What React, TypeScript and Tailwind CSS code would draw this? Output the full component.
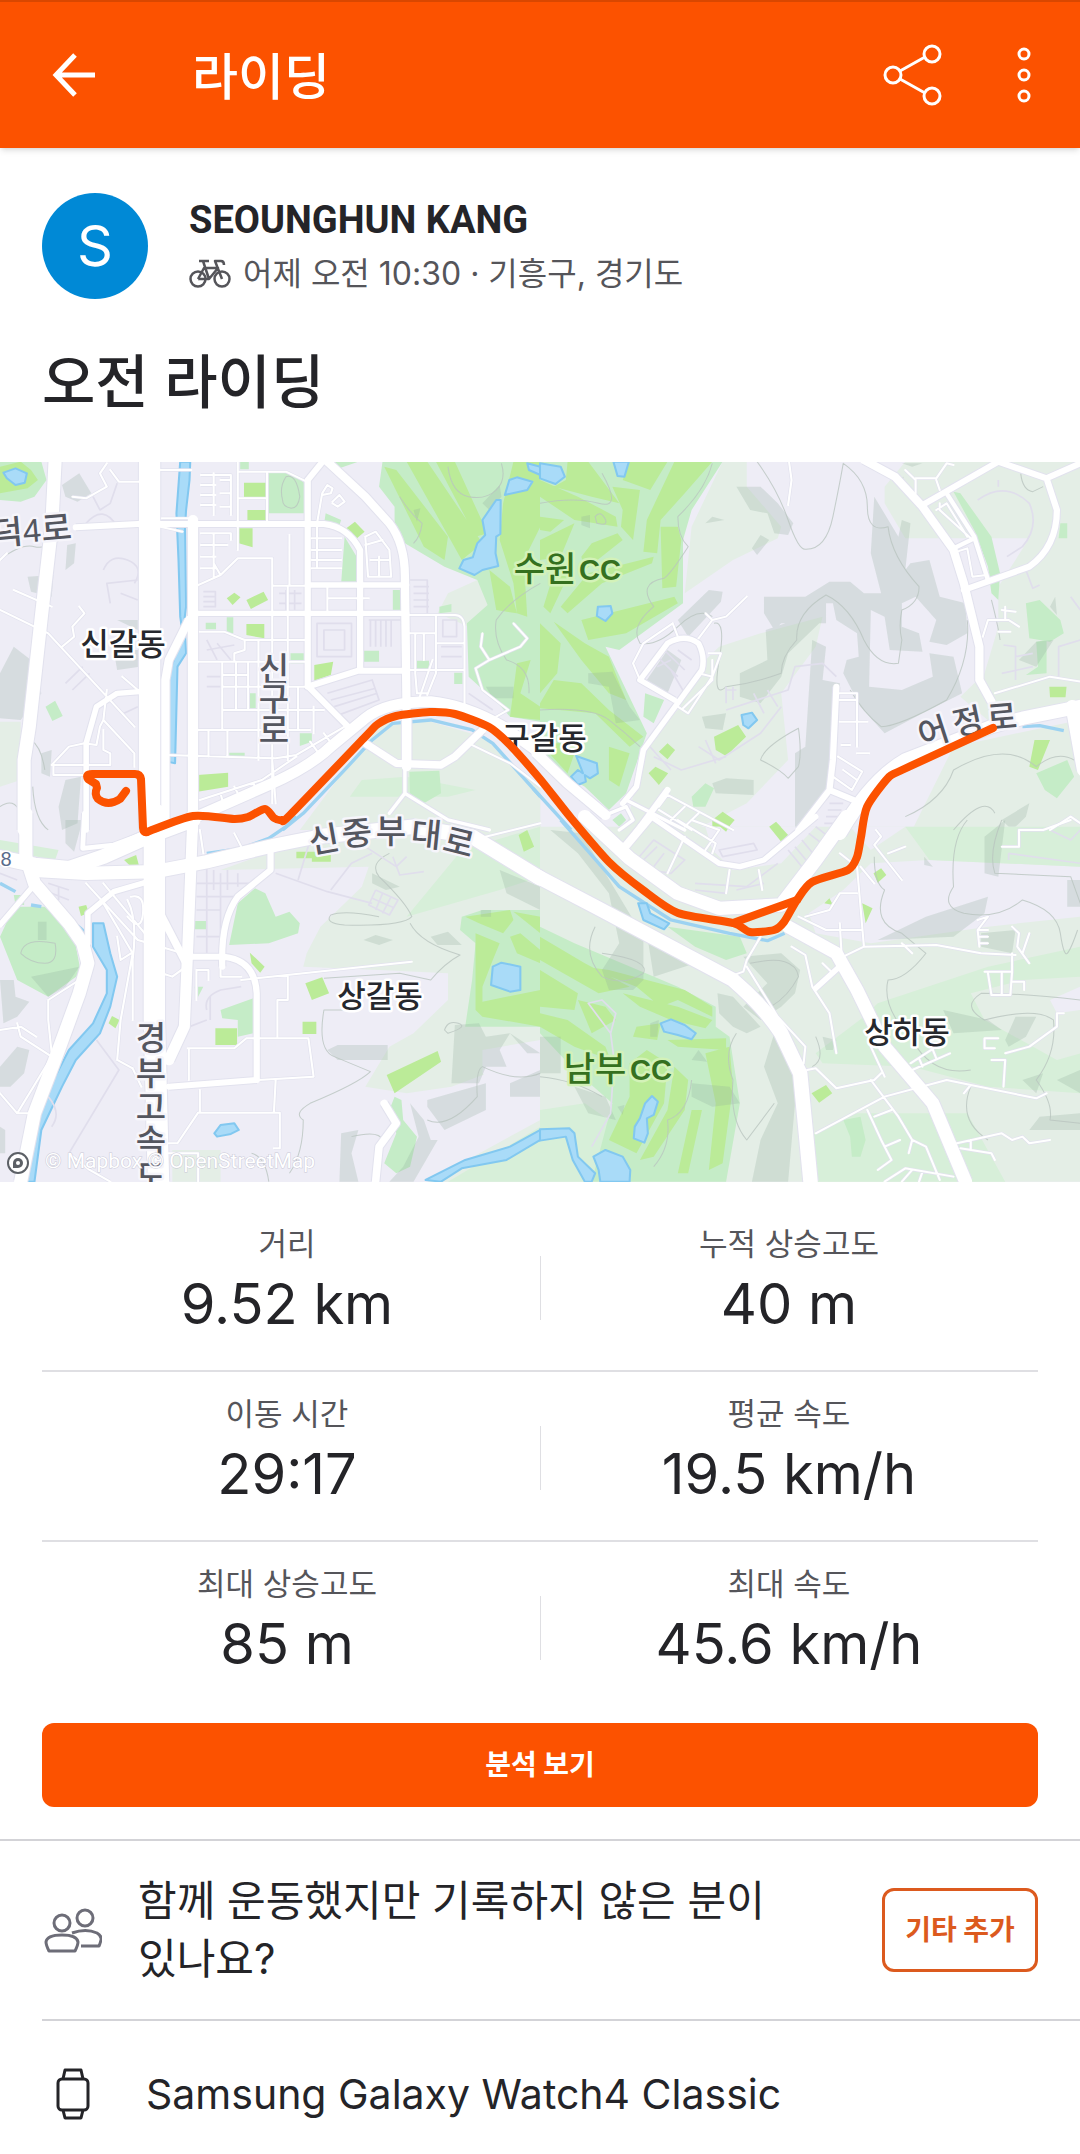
import type { ReactNode } from 'react';

/* ---------- map data, drawn in four tiles ---------- */

type Tile = {
  origin: string;
  pale?: string;
  lilac?: string;
  soft?: string;
  park?: string;
  bright?: string;
  shade?: string;
  water?: string;
  stream?: string;
  contour?: string;
  faint?: string;
  minor?: string;
  major: [number, string][];
};

const NW: Tile = {
  origin: 'translate(0 -2) scale(0.3446 0.3333)',
  pale: 'M1110 790L1250 785 1400 830 1568 985V1110H870L1000 930ZM0 785H60V960L0 980ZM1270 460L1300 400 1385 360 1420 435 1360 500Z',
  soft: 'M1015 1010L1050 960 1180 950 1380 990 1300 1010Z',
  park: 'M0 5H120L135 60 100 110 60 125 0 120ZM780 35H840L885 70V160H780ZM1110 5H1568V785L1480 770 1450 735 1360 650 1355 490 1415 435 1385 360 1290 320 1175 250 1145 215V140L1100 80ZM945 160L990 180 980 210 940 195ZM1000 230L1035 290V370H990ZM1140 390H1163V450H1140ZM1052 572H1100V605H1052ZM843 580H885V610H843ZM1210 602H1245V628H1210ZM1318 638H1342V672H1318ZM725 700H742V745H725ZM870 820H905V845L870 858ZM665 878H710V890H665ZM658 472H677V520H658ZM597 488H627V508H597ZM1275 440L1310 432V455L1275 460ZM132 740L160 722 182 768 152 783ZM1188 935L1275 932 1280 1000 1230 1030 1190 1005ZM697 5H722V28H697ZM965 5H1040L985 25Z',
  bright:
    'M0 20L60 5 90 30 110 60 80 85 0 100ZM1115 20L1150 30 1300 230 1290 300 1230 260ZM1180 5L1240 5 1400 250 1340 300ZM1265 5H1320L1415 220 1380 230ZM1450 240L1460 130 1490 5H1568V200L1520 300 1530 470 1500 460 1490 370ZM1420 330L1480 380 1500 460 1440 450ZM1500 610L1540 600 1510 700 1568 740V780L1480 770ZM708 68H772V112H708ZM718 150H772V185H718ZM693 205H733V262L693 250ZM1005 205L1030 185 1058 215 1030 240ZM658 415L680 398 698 412 675 435ZM715 420L765 395 778 420 728 447ZM715 492H767V535L715 525ZM912 615L967 605 960 645 912 662ZM573 945L662 938V980L573 995Z',
  shade:
    'M180 75L230 40 265 100 225 125 190 110ZM80 350L155 345 150 410 90 395ZM40 560L90 600 120 700 60 780 0 775V640ZM330 570H405V620L340 630ZM340 480H400V510ZM190 960L235 950 225 1090 180 1110 170 1040ZM195 255L220 250 215 310 190 330ZM120 880L150 870 145 950 120 940ZM1400 130L1450 75 1455 110 1420 150ZM1410 680H1490V715H1430ZM1200 150L1220 145 1210 185Z',
  water:
    'M523 5H552L550 60 540 150 537 200 540 440 535 480 540 580 515 620 508 910 485 905 488 650 530 520 523 470 518 300 512 160ZM10 38L45 25 78 40 72 68 45 75 20 55ZM1478 60L1500 52 1545 65 1530 90 1465 105ZM1440 120H1453L1452 222 1440 230 1438 280 1446 318 1400 330 1377 345 1333 325 1345 300 1372 292 1385 250 1408 225 1400 180ZM1530 10L1568 20V45L1535 30Z',
  stream: 'M820 1110L880 1060 1000 930 1080 840 1140 790 1250 780 1370 810 1430 850 1568 1010',
  contour:
    'M1300 20Q1310 100 1360 110T1440 90 1455 10M1160 110Q1190 160 1225 190 1220 230 1200 250M820 120Q810 80 830 50 860 40 870 110 865 145 845 145 820 140 820 120M1568 370Q1480 420 1440 480 1430 540 1470 600 1540 620 1535 700M90 840Q120 860 130 930M0 1040Q40 1010 60 1060M95 980Q100 1080 140 1110M0 300Q60 250 100 260T200 220',
  faint:
    'M830 390V455M855 390V455M810 400H875M810 430H875M590 395H625V440H590M590 410H625M590 425H625M920 490H1020V590H920ZM940 510H1000V570H940ZM1075 480V560M1090 480V560M1105 480V560M1120 480V560M1135 480V560M1070 480H1165M1190 360H1240V460M1200 380H1245M1200 400H1245M1200 420H1245M1200 440H1245M1285 480H1325V530H1285ZM950 700L1080 660 1100 720 970 770M960 720L1090 685M970 740L1095 700M600 540L630 600M630 550L670 600M600 570L680 555M270 110L290 150 320 130 340 70M250 190Q300 130 340 200M300 330Q320 280 370 300T390 370M320 430L310 370 400 360M350 400L400 420M190 670L240 620M210 690L260 640M360 760L400 740M1280 560H1340M1280 590H1340M600 650H640M600 680H640M1360 700L1430 750',
  minor:
    'M465 30H555M583 45H670V165M620 40V165M583 75H625M583 105H625M583 135H625M670 60H640M670 100H640M670 140H640M690 5V270M690 35H830L890 65M775 35V195M690 115H775M583 220H670V240M620 220V350M583 255H660M583 290H625M583 325H625M565 380L640 345 690 295H790V1030M620 310L640 345M840 225V375M790 377H885M950 380V460M950 415H1070M835 380V460M905 235H990M905 270H990M905 300H990M905 325H990M920 200V325M1060 230L1090 215 1130 270 1135 350H1068L1060 230M1075 300H1130M1100 290V350M1060 255L1110 240M920 190L935 100 950 75 965 85 960 100 935 105M965 125L985 105 1000 125 980 140 965 130M580 515H650L710 540H885M835 470V900M710 540V570L680 580V605M575 605H885M645 610V810M720 610V750M750 540V900M645 645H720M685 610V750M645 680H885M645 750H940M575 810H900M485 885L800 895 860 885 1000 800M660 810V890M605 810V890M865 680V810M910 740V820M790 900L800 1030M580 1020L760 960 860 890M640 1000L650 1040M680 980L700 1020M735 970L750 1000M900 845L925 880M940 820L965 855M1180 465H1320Q1345 465 1348 500V735M1265 465V640L1240 705M1185 520H1265M1205 520V640M1230 520V600M1180 630H1348M1270 550H1345M1205 640L1210 700H1240M1255 600L1215 720M210 110L250 115 310 80 290 40 310 10M320 30L345 65H405M230 440L245 460 210 500 215 530 180 560M0 450L140 520 310 710 390 800M40 390L150 440M245 850L280 855 290 800 300 780 310 690M300 780L390 880V920M150 915H320V880L300 870V810M150 915L200 860 245 850M155 915V945H245M355 650L400 690M470 175H550M465 200L530 215M0 300L20 280M1400 520L1395 560 1420 600 1510 560 1530 535 1490 490M1420 600L1380 625 1400 690 1475 750 1440 770M1360 850L1480 910 1568 980',
  major: [
    [38, 'M160 0L150 200 120 470 85 800 70 900V1110'],
    [62, 'M434 0V1110'],
    [30, 'M560 180V1110'],
    [18, 'M220 202L400 192H940Q1010 200 1045 270V630'],
    [18, 'M940 0L893 60V680L1040 632H1180'],
    [24, 'M945 0L1060 110 1130 190Q1175 250 1175 350L1180 760'],
    [16, 'M893 375H1180M560 460H1180'],
    [18, 'M900 685L1020 810'],
    [24, 'M548 480L490 600 480 660V1110'],
    [16, 'M405 695L340 700 280 740 250 850V1110'],
    [32, 'M560 1075L780 975Q900 920 960 860L1060 775Q1120 725 1250 725 1350 735 1460 800L1568 880'],
    [22, 'M1060 850L1150 910 1280 915 1320 890 1400 810'],
    [28, 'M1180 780V920'],
    [10, 'M1175 920V1000L1130 1060M1175 1000L1300 1080 1420 1110'],
  ],
};

const NE: Tile = {
  origin: 'translate(540 -2) scale(0.3446 0.3333)',
  pale: 'M420 400L440 200 530 5H600V80L700 200 690 235 560 300ZM520 560L640 520 820 470 800 560 700 700 720 900 600 1030 450 1110H250L300 850 400 750 480 600ZM1000 80L1060 5H1568V760L1310 790 1220 710 1290 640 1330 500 1330 380 1420 235H1060L1000 130ZM1080 1110L1200 860 1568 780V1110Z',
  park: 'M0 5H530L440 150 415 240V430L230 570 190 560 310 820 250 1000 200 1050 130 980 0 900ZM1200 95L1220 100 1310 230 1335 340 1330 420 1310 400 1300 320 1260 210ZM1410 430L1450 420 1510 480 1520 520 1480 545 1420 535ZM1440 545L1470 540V640L1410 645 1445 620ZM1510 190H1530V235H1505ZM1440 940L1530 900 1550 950 1500 1015 1465 990ZM440 1010L480 970 505 985 480 1040 445 1040ZM305 700L360 720 330 790 300 770ZM210 1080L235 1060 250 1080 230 1100Z',
  bright:
    'M40 80L75 60 80 5 140 5 180 60 230 130 150 110ZM0 60L110 110 220 170 225 200 100 180 0 110ZM0 170L70 180 30 215 0 210ZM210 80L290 90 270 240 235 200 240 150ZM240 60L260 5H370L320 90ZM390 5H500L420 100 350 180 340 280 300 275 310 180ZM350 200L400 200 410 240 395 380 355 385ZM100 190L60 290 0 300V240ZM150 250L225 220 240 240 130 330 120 290ZM60 440L140 340 330 290 325 310 180 370 80 460ZM10 440L40 340 80 350 30 460ZM120 480L390 410 400 430 250 520 140 540ZM0 490L60 550 50 640 0 700ZM40 485L130 550 200 590 250 720 200 700 120 600ZM0 730L40 660 120 670 200 750 300 830 260 860 160 760 0 745ZM0 850L110 850 80 940ZM200 860L260 880 230 980 200 960ZM505 830L575 795 598 830 540 888 510 870ZM345 875L370 850 392 870 370 898ZM315 940L335 920 372 940 345 975ZM1435 840L1480 840 1445 930 1420 920ZM1478 680H1528L1525 712H1480ZM500 1080L530 1055 565 1080 540 1110H500ZM670 1110L685 1088 710 1110Z',
  shade:
    'M570 80L640 80 690 130 735 190 720 225 680 220 660 160 610 150ZM640 225L665 240 630 285 615 265ZM970 110L1040 230 1050 180 1075 190 1060 330 1075 310 1130 300 1160 410 1235 430 1240 520 1180 555 1130 545 1150 480 1090 410 1050 430 1050 500 1100 520 1110 575 1015 570 1000 470 960 450 955 680 1050 690 1140 650 1130 580 1200 590 1225 700 1110 760 1000 820 930 740 880 640 890 600 925 590 920 520 860 480 850 430 830 430V490L700 490 680 510 650 460V410L770 410 840 365H900L940 400 990 400 960 280ZM655 510L740 480 830 470 720 580 700 650 640 730 580 710 580 640 660 600ZM790 540L830 560 820 660 870 670 860 900 840 1010 750 1110H740V880L770 860ZM400 480L490 390 530 395 525 425 430 530ZM140 640L210 635 260 740 290 780 220 790 200 680 140 670ZM470 770L540 760 530 810 480 805ZM500 970L540 955 620 960V1005L510 1000ZM310 660L370 570 410 600 370 700ZM1340 1080L1420 1030 1410 1070 1370 1110ZM480 190L500 170 535 180ZM120 170L145 165V205L120 195ZM1480 440L1495 410 1500 465ZM1440 545L1490 540 1440 620 1390 600ZM1050 10H1110L1080 20ZM1025 60L1055 50 1050 90ZM975 710L1000 710 1015 770 990 770Z',
  water:
    'M0 10L60 20 72 50 45 72 0 55ZM213 5H258L245 50 225 48ZM168 440L205 438 210 460 190 483 165 468ZM585 765L615 758 630 780 605 805 590 795ZM105 888L165 910 168 940 145 955 130 945 133 965 110 975 90 950 110 930 125 940Z',
  stream: 'M1400 800L1450 797 1520 812M-20 985L90 1110',
  contour:
    'M630 5Q690 90 720 180T770 268Q830 270 850 170T880 10Q950 60 950 140T1010 200Q1020 290 1100 380 1100 430 1050 450 1040 500 1050 540L1040 610Q980 620 940 540 900 440 830 405 740 460 745 540 700 590 700 640 620 670 540 680 500 720 520 600T505 490M500 10Q480 90 400 170 400 230 430 260 380 340 360 355 280 370 330 440 260 500 290 550 340 560 400 500T500 470M0 130Q100 110 170 130T180 40M0 750Q150 740 200 780T290 860M720 955Q700 930 640 900 650 860 750 805 760 880 750 920ZM1240 480Q1250 600 1180 720 1040 800 990 800 940 760 900 690M1550 900Q1500 870 1440 920 1350 840 1200 930 1170 1020 1060 1070M1200 1110Q1290 1000 1320 1060M1395 40Q1400 90 1430 95L1460 80M1310 420Q1330 500 1335 540M160 170Q175 150 188 175T165 190Z',
  faint:
    'M1270 120Q1350 60 1420 130 1450 200 1400 260L1355 290M1345 555L1380 560V660M1340 640L1430 620M1380 590L1430 580M1505 650V560L1568 540M1410 330L1430 385 1450 375M340 590L400 650M360 570L420 630M380 630L420 700M400 570L440 600M340 620L380 600M540 680V730M560 680V720M540 690H570M540 750L720 690 740 620 820 610 860 650M620 700L650 760M660 690L690 740M480 840L510 910M460 860L520 900 640 820 700 740M310 850L380 930M330 890L410 930 540 890M840 1030H880M835 1050H875M830 1070H870M825 1090H865M1540 410L1568 450M1330 60V80',
  minor:
    'M385 490L300 550 270 610 290 660M385 490L400 530M490 580H525L500 650 430 760 400 740M500 600V660L415 745M500 650L460 640M600 410L540 470 500 480 460 535M480 460L500 480M722 0L730 60 720 135M870 700H920V860M870 720H920M870 785H950M875 855H900M920 880H955M865 890L935 935 905 990 850 950M880 930L920 960M345 1040L370 1005 560 1110M345 1050L440 1110M380 1080L420 1040M420 1100L460 1060M1160 130V150L1250 235M1150 150L1180 130 1240 230M1210 275L1240 265 1255 350 1295 345M1285 530L1300 480H1360L1390 500M1330 515H1365M1340 450L1380 455M1350 440V480M1060 30L1090 60V100M1090 55L1150 55 1180 10 1200 15M1150 60L1160 90M1320 700L1480 650 1568 665M1480 1110L1540 1070 1568 1090',
  major: [
    [24, 'M940 0L1030 50 1110 140 1200 270 1230 370 1275 560V660L1310 725'],
    [18, 'M1110 135L1330 5 1470 55 1568 10M1470 55L1500 150Q1500 260 1420 320L1230 390'],
    [13, 'M1180 100L1260 230 1300 360M1200 265L1260 235'],
    [40, 'M870 1120Q960 960 1060 900L1310 800 1400 775 1568 740'],
    [40, 'M1545 740L1578 930'],
    [16, 'M390 720L290 660 370 550Q420 520 460 550 480 590 470 630L300 870 280 980 240 1030'],
    [18, 'M860 680L850 900 840 990 750 1110M840 990L910 1020'],
    [30, 'M-10 880L80 970 190 1065'],
    [10, 'M190 1065L250 1040 270 1080 230 1110M250 1020L420 1110'],
    [18, 'M370 990L270 1130'],
  ],
};

const SW: Tile = {
  origin: 'translate(0 358) scale(0.3446 0.3333)',
  pale: 'M890 400L930 320 1050 200 1070 140 640 150 800 90 1000 0H1568V1085H1240L1568 900V700L1310 800 1180 820 1060 800 1130 680 1200 640 1300 540V460L1100 450 880 440ZM500 990H640V1085H500Z',
  lilac: 'M1400 690L1568 660V830L1480 830 1400 760Z',
  soft: 'M1180 290L1340 90 1568 20V170L1450 210ZM1300 1085L1568 920V1085ZM0 60L170 90 160 120 0 90Z',
  park: 'M1340 290L1400 270H1568V620H1350L1370 480 1380 370 1335 330ZM690 250L740 205 770 220 800 290 840 275 870 310 865 340 780 370 665 375ZM40 260H130L215 350 235 460 140 530 50 480 0 350ZM640 570L735 535V640L690 650V600L645 595ZM1145 830L1165 840 1170 900 1210 950 1190 1040 1150 1060 1115 1030 1150 940 1130 870ZM565 500H590L570 540ZM563 303H600V328H563ZM40 225H70V255H45Z',
  bright:
    'M1350 290L1480 270 1490 300 1460 340 1390 310ZM1380 340L1450 370 1430 420 1400 500V590L1380 570ZM1480 350L1510 340 1568 390V430L1500 400ZM1400 545L1568 510V620L1400 590ZM1490 275L1568 290V340ZM886 490L935 472 955 520 905 540ZM625 625H688V675H625ZM878 605H918V642H878ZM1122 765L1270 693 1280 725 1145 820ZM725 398L768 440 755 458 730 430ZM228 260L250 255 258 278 235 288ZM325 588L347 600 335 625 315 610ZM360 120L395 105 405 143 385 145ZM860 95H960V125H905V115H860ZM1505 45L1530 30 1550 80 1520 95Z',
  shade:
    'M950 690L980 675H1125V720H980ZM1320 615L1390 610 1410 650 1480 640 1450 690 1470 740 1410 740 1390 790H1310ZM1480 640L1568 700 1530 700ZM1480 790L1568 750V830H1480ZM1240 840L1410 790V870L1290 930 1240 860ZM1190 850L1230 900 1250 960 1270 960 1200 1085H1130L1170 1040 1215 950ZM990 940L1040 930 1020 1000 1040 1085H985ZM1080 160L1160 200 1120 210 1080 190ZM1250 350L1300 335 1340 375H1270ZM1450 150L1568 200V270L1470 220ZM0 480L40 480 45 530 85 545 50 590 10 610ZM0 740L50 680 85 690 70 760 30 800H0ZM110 305H135V360H110ZM90 470L230 440 190 500 140 530ZM190 0H240L215 95 190 70ZM1055 360L1090 345 1140 360 1100 375ZM1395 270H1425V290H1395ZM0 920L15 930V1000H0Z',
  water:
    'M270 310H300L320 400 340 470 320 560 290 640 220 720 180 800 120 930 100 1085H65L90 950 150 790 200 690 270 610 310 520V450L270 380ZM622 940L640 915 680 910 693 930 670 942 630 950ZM1235 1080L1350 1020 1480 980 1568 930V960L1470 1020 1340 1045 1280 1085ZM1430 440L1455 428 1510 440V510L1480 515 1425 495Z',
  stream: 'M0 190L45 215M90 255L120 260M195 290L250 340M600 100L700 85 780 55 830 20 860 -10',
  contour:
    'M1130 100Q1070 130 1100 170 1180 250 1195 290 1170 320 1000 315 940 310 960 285 1000 270 1100 290M1190 310Q1220 370 1335 405 1290 430 1250 480L1160 460 940 475M1000 570H940Q920 690 970 710L1075 755Q1040 790 900 850 850 880 880 900 880 1000 840 1060M60 400Q70 350 160 370 170 430 130 430T60 400M1568 760Q1500 790 1400 740 1380 750 1385 830 1300 930 1240 900M1290 630Q1300 600 1330 610T1300 640ZM1020 950Q1100 930 1110 960M730 1000Q770 1010 780 1085',
  faint:
    'M570 230H680M570 270H640M600 140V400M640 160V400M570 190H740M570 350H640M800 160L950 215 1080 250M960 210L1020 130 1080 100M865 180L900 60M1090 210L1155 240 1130 285 1070 255 1090 210M1110 220L1090 270M1135 230L1110 280M1080 235L1140 262M1140 110L1160 165 1230 155M1060 80L1150 140 1180 110M690 160V200M620 150V210M660 150V210M600 570Q590 530 640 510L700 500M610 600V530M140 190L200 210M150 220L200 240M0 160L50 180M170 200V240M550 500V620L600 600M280 660L345 750 200 1000M140 830Q180 880 150 920',
  minor:
    'M700 480L1195 425M835 465V540H805V650M545 685H680L715 655H895L910 770 750 780M548 685V780M580 810V875M800 780L795 875M515 970L575 878H812V985H795M515 970H490M490 1000H575V1085M640 440V470H700M570 450V540M570 450H605V480M370 240Q400 300 385 420V600M340 720L350 600 385 400 300 250M340 720L385 745M250 190L400 360 530 400M300 190L420 340M380 230Q420 220 415 280T370 290M340 350L350 420 380 400M0 630L60 620 105 650M50 610L60 650 150 710M0 820L50 880H90M50 880L150 710M140 540L230 480M140 540V600L150 700M470 460L500 470 540 440M580 30L590 100M680 40L700 80M1370 60L1568 10M200 1000L260 1050 320 1085M385 745L410 800',
  major: [
    [38, 'M75 -20V110L100 190 200 310 240 370 255 430 230 520 170 690 100 880 60 1085'],
    [44, 'M-10 110L100 135 200 145 300 110 430 50 560 0'],
    [14, 'M245 -20L240 85 330 75 420 40'],
    [40, 'M90 150L250 160 450 155 600 125 800 75 920 50'],
    [44, 'M920 50L1200 20 1370 50 1568 175'],
    [62, 'M448 -20V600L460 1085'],
    [32, 'M560 -20L545 380 535 620 490 720'],
    [22, 'M465 280L540 430'],
    [18, 'M490 800L745 780M550 410H650Q740 420 745 520V780M785 90V150L690 230Q640 300 645 440'],
    [16, 'M95 200L0 315M255 370V280L330 215 430 185'],
    [22, 'M1115 850L1150 910 1100 980 1090 1085'],
  ],
};

const SE: Tile = {
  origin: 'translate(540 358) scale(0.3446 0.3333)',
  pale: 'M0 20H1568V1085H0Z',
  lilac:
    'M480 20H800L700 130 560 150 500 90ZM960 130L1130 120 1568 140V290L1300 320 960 370 800 340 780 280 880 210ZM1480 540L1568 500V570L1500 580ZM900 20H1060L960 90Z',
  soft: 'M980 550L1300 440 1568 380V470L1400 480 1250 520 1290 600 1500 720 1568 700V820L1300 800 1080 740 820 730 800 700 940 590ZM780 950L900 880 1240 880 1350 1085H800ZM0 870L130 850 200 900 150 1085H0ZM1060 20H1568V140L1130 120Z',
  park: 'M0 270V320L100 370 400 500 510 560V620L550 650 580 850 540 1085H150L210 850 100 750 0 640ZM370 320L580 350 600 400 540 420 450 380ZM880 900L930 890 945 960 930 1010 905 1010 900 950Z',
  bright:
    'M0 350L130 430 260 500 170 520 0 420ZM0 450L110 520 100 570 0 560ZM130 440L200 450 420 510 500 560V590L400 540 350 560 280 500ZM240 520L400 560 500 600 480 625 380 600 290 560ZM110 540L190 560 220 600 150 640ZM280 620L350 610 340 660 270 650ZM370 660L540 655V690L400 680ZM310 690L370 730 360 850 280 1000 200 960 260 830 260 730ZM390 740L430 780 420 870 330 1010 290 1020 370 870ZM480 700L550 680 560 800 530 1030 490 1050 510 850ZM440 870L470 870 430 1060 400 1060ZM0 580L80 600 190 680 205 720 100 680 0 620ZM500 0H560L540 35ZM665 20L685 5 720 45 700 65ZM968 160L990 145 1005 165 980 188ZM788 820L830 795 848 820 810 848ZM825 250L840 235 850 255ZM935 250L965 265 945 310Z',
  shade:
    'M30 30L120 40 300 350V480L270 510H200L180 450 230 370 200 220 110 100ZM310 340L420 390 450 430 330 470ZM590 410L700 400 755 450 740 520 700 560 640 600 590 560 660 490ZM515 520L560 530 640 620 600 640 560 620 520 580ZM680 640L750 720 740 850 720 1085H615L640 960 690 850 650 740ZM980 360L1120 290 1300 230 1290 280 1200 350ZM1290 50L1350 0 1330 170 1290 160ZM1170 570L1300 600 1340 630 1200 640ZM1350 660L1380 590 1440 590 1410 650 1360 680ZM1420 930L1450 890 1568 880V930ZM1500 780L1568 750V820ZM440 790L550 800 580 850 500 860 440 830ZM100 800L190 830 220 900 140 880ZM0 650H60V760H0ZM820 650L860 660 850 690H830ZM1280 340L1380 330 1370 400 1280 380ZM1400 780L1460 760 1440 820ZM320 610L345 600 340 650H320ZM440 720L460 690 485 725ZM225 860L245 855 240 885ZM1115 110L1140 140 1115 135ZM1530 180H1568V260H1530Z',
  water:
    'M350 610L380 598 420 615 452 640 440 658 400 645 360 635ZM305 850L325 828 342 845 330 885 310 895 313 940 303 968 272 955 275 920 290 895ZM155 1010L190 990 240 1010 262 1050 260 1085H175L170 1050ZM0 928L85 925 100 940 110 1010 160 1060 150 1085H130L95 1020 75 950 0 962ZM285 250L310 250 320 280 375 310 360 328 300 300Z',
  stream: 'M60 0L230 200 380 300 550 340 660 362 710 340',
  contour:
    'M1240 0Q1190 60 1200 200 1160 260 1230 280 1330 300 1400 240 1500 270 1510 340T1530 400 1560 330M1340 0Q1300 100 1320 160L1540 170 1568 250M970 110Q970 190 1000 210 960 310 1050 340L1120 400Q1060 480 1010 480 990 560 1080 660 1140 770 1250 750M160 320Q120 400 180 470 240 500 300 460 320 420 180 400M610 430Q740 400 750 470 720 530 670 560M570 640Q530 700 560 780 550 900 600 960L680 850M1568 540Q1400 520 1280 520 1220 560 1290 600 1440 560 1490 600 1500 700 1440 780 1490 850 1480 900L1568 910M1250 800Q1210 900 1300 960M440 780Q430 880 370 900 380 980 330 1040M800 650Q830 720 790 740M0 770Q100 780 180 830',
  faint:
    'M280 120L330 60 420 120 380 160 320 150ZM300 120L340 80M330 140L360 100M450 190L600 200 690 130M450 210L540 220M570 210L650 190M520 90L620 70 630 90 530 110ZM720 90L760 140M740 80L780 130M760 60L800 110M140 550L180 540 220 580 205 640ZM205 640L215 720 205 880 150 980M780 40L830 80M800 20L850 60M1360 100L1568 130M1360 100V120M1480 30L1540 60 1568 30',
  minor:
    'M640 350L600 420 590 455 550 470M600 440L690 590 770 680 765 730M550 150L540 220M635 150L645 210M370 160L420 50M400 0L510 70 500 100M440 0L520 30 480 90M730 380L770 405 790 500 840 580 860 700M820 430L850 460M775 750L800 745 860 805 970 780 990 760M880 410L940 380 1150 375 1280 400 1380 405M1050 370L1080 400M1370 320L1390 340 1385 380 1420 430M1420 340L1400 400M1370 400V460M1290 455H1370L1365 525H1310L1300 460M1340 460V525M1370 485H1405V510M1270 300L1300 290 1270 330 1275 380M1275 330H1300M1275 350H1300M1275 370H1300M800 940L1000 830 1180 780 1250 795 1440 835 1470 820M1250 795L1230 820M960 780L1040 890 1080 960 1070 1000M1080 960L1120 980 1160 1080M950 870L990 960 1020 1020 980 1050M970 890L1020 870M1000 980L1045 960M960 680L1000 770M1210 970L1340 940 1370 960 1400 950 1420 970 1480 960M1220 985L1310 1000 1320 1020M1250 960V990M1310 720H1350L1345 800M1350 700L1420 680 1500 620V580H1520M1290 655H1330M1290 655V685H1320M1080 750L1190 700M1075 730L1150 680M1100 715L1110 740M1140 690L1150 715M870 100L920 140 940 380M920 220H870L840 270 770 290M750 290L830 330H935M870 310L875 400M975 30L990 50 970 75 1050 180M1010 100L1060 80M930 140L970 190M1340 80H1390V30H1460L1540 0M1000 1085L1060 1045 1200 1070M1050 1085L1080 1050M1100 1085L1110 1055',
  major: [
    [40, 'M130 -10L260 115 400 220 520 265 700 255 800 120 890 -10'],
    [42, 'M-10 168L160 260 560 480Q650 560 700 640L755 760 785 1085'],
    [38, 'M720 320L860 400 920 510 1000 680 1140 850 1235 1085'],
    [24, 'M235 95L320 -10'],
    [16, 'M330 -5L520 130 580 140 650 120 800 -10M800 505L880 430'],
  ],
};

const TILES = [NW, NE, SW, SE];

const ROUTE_START =
  'M126 329L120 337Q108 345 98 337 94 332 97 326L96 322 88 317Q85 312 92 312H135Q140 312 141 317L143 366Q143 371 147 370';

const ROUTE_REST: [number, number][] = [
  [147, 370], [193, 354], [234, 357], [248, 355], [265, 347], [274, 356], [282, 358], [290, 353],
  [365, 275], [378, 262], [396, 254], [430, 250], [455, 252], [489, 265], [510, 283], [540, 317],
  [571, 356], [609, 400], [643, 428], [678, 451], [733, 461], [750, 470], [774, 468], [784, 460],
  [797, 438], [812, 420], [848, 408], [857, 395], [861, 375], [867, 345], [888, 316], [902, 308], [993, 266],
];

/* Rounds the corners of a polyline with a light Catmull-Rom spline. */
function smooth(points: [number, number][]) {
  const k = 8;
  let d = `M${points[0][0]} ${points[0][1]}`;
  for (let i = 0; i < points.length - 1; i++) {
    const a = points[Math.max(i - 1, 0)];
    const b = points[i];
    const c = points[i + 1];
    const e = points[Math.min(i + 2, points.length - 1)];
    d += `C${b[0] + (c[0] - a[0]) / k} ${b[1] + (c[1] - a[1]) / k} ${c[0] - (e[0] - b[0]) / k} ${c[1] - (e[1] - b[1]) / k} ${c[0]} ${c[1]}`;
  }
  return d;
}

function Layer({ render }: { render: (t: Tile) => ReactNode }) {
  return (
    <>
      {TILES.map((t) => (
        <g key={t.origin} transform={t.origin}>
          {render(t)}
        </g>
      ))}
    </>
  );
}

type Label = { t: string; x: number; y: number; r?: number; kind: 'place' | 'road' | 'golf' };

const LABELS: Label[] = [
  { t: '신갈동', x: 123, y: 193, kind: 'place' },
  { t: '구갈동', x: 544, y: 287, kind: 'place' },
  { t: '상갈동', x: 380, y: 545, kind: 'place' },
  { t: '상하동', x: 907, y: 581, kind: 'place' },
  { t: '수원', x: 545, y: 119, kind: 'golf' },
  { t: '남부', x: 595, y: 619, kind: 'golf' },
  { t: '덕4로', x: 33, y: 80, r: -5, kind: 'road' },
  { t: '신', x: 274, y: 219, kind: 'road' },
  { t: '구', x: 274, y: 249, kind: 'road' },
  { t: '로', x: 274, y: 280, kind: 'road' },
  { t: '신', x: 326, y: 389, r: -10, kind: 'road' },
  { t: '중', x: 358, y: 383, r: -5, kind: 'road' },
  { t: '부', x: 391, y: 381, kind: 'road' },
  { t: '대', x: 425, y: 384, r: 6, kind: 'road' },
  { t: '로', x: 456, y: 392, r: 14, kind: 'road' },
  { t: '어', x: 937, y: 281, r: -18, kind: 'road' },
  { t: '정', x: 970, y: 271, r: -12, kind: 'road' },
  { t: '로', x: 1003, y: 267, r: -5, kind: 'road' },
  { t: '경', x: 151, y: 588, kind: 'road' },
  { t: '부', x: 151, y: 623, kind: 'road' },
  { t: '고', x: 151, y: 657, kind: 'road' },
  { t: '속', x: 151, y: 691, kind: 'road' },
  { t: '도', x: 151, y: 727, kind: 'road' },
];

const LABEL_FILL = { place: '#26282d', road: '#54565f', golf: '#35701f' };
const LABEL_HALO = { place: '#ffffff', road: '#f6f5fb', golf: '#d3f2b8' };
const LABEL_SIZE = { place: 31, road: 33, golf: 34 };

function RouteMap() {
  return (
    <svg
      viewBox="0 0 1080 720"
      className="block h-auto w-full overflow-hidden"
      role="img"
      aria-label="라이딩 경로 지도"
    >
      <rect width="1080" height="720" fill="#eeedf6" />
      <Layer
        render={(t) => (
          <>
            <path d={t.pale} fill="#e4eee6" />
            <path d={t.lilac} fill="#eeedf6" />
            <path d={t.soft} fill="#d7efd9" />
            <path d={t.park} fill="#c5ecc7" />
            <path d={t.bright} fill="#bbeb98" />
            <path d={t.shade} fill="#8fac9c" opacity="0.25" />
          </>
        )}
      />
      <Layer
        render={(t) => (
          <g fill="none" strokeLinejoin="round">
            <path d={t.contour} stroke="#b9c4bf" strokeWidth="3" opacity="0.8" />
            <path d={t.stream} stroke="#9cd2f1" strokeWidth="10" />
            <path d={t.water} fill="#a9dbf8" stroke="#82c8f0" strokeWidth="6" />
            <path d={t.faint} stroke="#e0deec" strokeWidth="5" />
          </g>
        )}
      />
      <Layer
        render={(t) => (
          <g fill="none" stroke="#e2e2ee" strokeLinejoin="round">
            <path d={t.minor} strokeWidth="10" />
            {t.major.map(([w, d]) => (
              <path key={d} d={d} strokeWidth={w + 6} />
            ))}
          </g>
        )}
      />
      <Layer
        render={(t) => (
          <g fill="none" stroke="#ffffff" strokeLinejoin="round" strokeLinecap="round">
            <path d={t.minor} strokeWidth="6" />
            {t.major.map(([w, d]) => (
              <path key={d} d={d} strokeWidth={w} />
            ))}
          </g>
        )}
      />
      <g
        textAnchor="middle"
        strokeWidth="5"
        strokeLinejoin="round"
        paintOrder="stroke"
        className="font-['Liberation_Sans','Noto_Sans_CJK_KR',sans-serif]"
      >
        {LABELS.map((l, i) => (
          <text
            key={i}
            x={l.x}
            y={l.y}
            fontSize={LABEL_SIZE[l.kind]}
            fill={LABEL_FILL[l.kind]}
            stroke={LABEL_HALO[l.kind]}
            fontWeight={500}
            transform={l.r ? `rotate(${l.r} ${l.x} ${l.y})` : undefined}
          >
            {l.t}
          </text>
        ))}
        <g fill={LABEL_FILL.golf} stroke={LABEL_HALO.golf} fontWeight="700" fontSize="29">
          <text x="600" y="118">CC</text>
          <text x="651" y="618">CC</text>
        </g>
        <text x="6" y="404" fontSize="20" fill="#5a6b8c" stroke="#ffffff" strokeWidth="3">8</text>
      </g>
      <g fill="none" stroke="#fc5200" strokeWidth="8" strokeLinecap="round" strokeLinejoin="round">
        <path d={ROUTE_START} />
        <path d={smooth(ROUTE_REST)} />
        <path d="M733 461L797 438" />
      </g>
      <circle cx="18" cy="701" r="10" fill="#ffffff" stroke="#5c6066" strokeWidth="2" />
      <path d="M13 706V701A5 5 0 1 1 18 706Z" fill="#5c6066" />
      <circle cx="18" cy="701" r="2" fill="#ffffff" />
      <text
        x="45"
        y="706"
        fontSize="21"
        fill="#ffffff"
        stroke="#c9c9d6"
        strokeWidth="1"
        paintOrder="stroke"
        className="font-[Roboto,sans-serif]"
      >
        © Mapbox © OpenStreetMap
      </text>
    </svg>
  );
}

/* ---------- icons ---------- */

function BackIcon() {
  return (
    <svg width="44" height="44" viewBox="0 0 44 44" fill="none" stroke="currentColor" strokeWidth="5" aria-hidden="true">
      <path d="M43 22H5M23 2L4 22 23 42" />
    </svg>
  );
}

function ShareIcon() {
  return (
    <svg width="60" height="62" viewBox="0 0 60 62" fill="none" stroke="currentColor" strokeWidth="3" aria-hidden="true">
      <circle cx="11" cy="31" r="8" />
      <circle cx="50" cy="10" r="8" />
      <circle cx="50" cy="52" r="8" />
      <path d="M18 27L43 13M18 35L43 49" />
    </svg>
  );
}

function MoreIcon() {
  return (
    <svg width="16" height="60" viewBox="0 0 16 60" fill="none" stroke="currentColor" strokeWidth="3" aria-hidden="true">
      <circle cx="8" cy="9" r="5" />
      <circle cx="8" cy="30" r="5" />
      <circle cx="8" cy="51" r="5" />
    </svg>
  );
}

function BikeIcon() {
  return (
    <svg
      width="42"
      height="30"
      viewBox="0 0 42 30"
      fill="none"
      stroke="currentColor"
      strokeWidth="2.5"
      strokeLinejoin="round"
      aria-hidden="true"
      className="shrink-0"
    >
      <circle cx="9" cy="20" r="7.5" />
      <circle cx="33" cy="20" r="7.5" />
      <path d="M9 20L15 9H29L20 20H9M20 20L14 2M10 2H20M33 20L26 2H32Q35 2 35 6" />
    </svg>
  );
}

function PeopleIcon() {
  return (
    <svg
      width="60"
      height="48"
      viewBox="0 0 60 48"
      fill="none"
      stroke="currentColor"
      strokeWidth="3"
      strokeLinejoin="round"
      aria-hidden="true"
      className="shrink-0"
    >
      <circle cx="20" cy="17" r="8" />
      <circle cx="43" cy="12" r="8" />
      <path d="M7 45Q4 39 4 36 5 29 20 29T36 36Q36 39 33 45ZM30 27Q44 22 55 27 60 30 59 34 58 38 57 40H39" />
    </svg>
  );
}

function WatchIcon() {
  return (
    <svg
      width="34"
      height="52"
      viewBox="0 0 34 52"
      fill="none"
      stroke="currentColor"
      strokeWidth="3"
      strokeLinejoin="round"
      aria-hidden="true"
      className="shrink-0"
    >
      <rect x="2" y="11" width="30" height="31" rx="4" />
      <path d="M7 11L9 2H25L27 11M7 42L9 50H25L27 42" />
    </svg>
  );
}

/* ---------- page ---------- */

const STATS = [
  [
    { label: '거리', value: '9.52 km' },
    { label: '누적 상승고도', value: '40 m' },
  ],
  [
    { label: '이동 시간', value: '29:17' },
    { label: '평균 속도', value: '19.5 km/h' },
  ],
  [
    { label: '최대 상승고도', value: '85 m' },
    { label: '최대 속도', value: '45.6 km/h' },
  ],
];

export default function App() {
  return (
    <div className="min-h-screen bg-white font-['Inter','Noto_Sans_CJK_KR',sans-serif] text-[#242428]">
      <header className="relative flex h-[148px] items-center border-t-2 border-[#d94700] bg-[#fc5200] pr-12 pl-[52px] text-white shadow-md">
        <button type="button" aria-label="뒤로">
          <BackIcon />
        </button>
        <h1 className="ml-24 pt-1 text-[50px] leading-[60px] font-medium">라이딩</h1>
        <button type="button" aria-label="공유" className="ml-auto">
          <ShareIcon />
        </button>
        <button type="button" aria-label="더보기" className="ml-[74px]">
          <MoreIcon />
        </button>
      </header>

      <main>
        <section className="px-[42px] pt-10 pb-[38px]">
          <div className="flex items-center gap-[41px]">
            <div className="flex size-[106px] shrink-0 items-center justify-center rounded-full bg-[#0089d6] text-[56px] text-white">
              S
            </div>
            <div className="pt-2">
              <p className="font-[Roboto,sans-serif] text-[38px] leading-[48px] font-bold">SEOUNGHUN KANG</p>
              <p className="flex items-center gap-3 text-[32px] leading-[60px] text-[#55555a]">
                <BikeIcon />
                어제 오전 10:30 · 기흥구, 경기도
              </p>
            </div>
          </div>
          <h2 className="mt-9 text-[58px] leading-[84px] font-medium">오전 라이딩</h2>
        </section>

        <RouteMap />

        <section className="px-[42px] pt-5">
          {STATS.map((row, i) => (
            <dl
              key={i}
              className="relative grid h-[170px] grid-cols-2 border-b-2 border-[#dfdfe3] pt-5 text-center last-of-type:border-b-0"
            >
              {row.map((s) => (
                <div key={s.label} className="first:pr-2 last-of-type:pr-0">
                  <dt className="text-[31px] leading-[44px] text-[#55555a]">{s.label}</dt>
                  <dd className="text-[56px] leading-[76px]">{s.value}</dd>
                </div>
              ))}
              <span className="absolute top-[54px] left-1/2 h-16 w-px bg-[#dfdfe3]" />
            </dl>
          ))}
          <button
            type="button"
            className="mt-[11px] block h-[84px] w-full rounded-xl bg-[#fc5200] text-[28px] font-bold text-white"
          >
            분석 보기
          </button>
        </section>

        <section className="mt-8 flex items-center border-t-2 border-[#d3d3d7] px-[42px] py-[31px]">
          <span className="text-[#6d6d78]">
            <PeopleIcon />
          </span>
          <p className="ml-9 flex-1 text-[42px] leading-[58px] break-keep">
            함께 운동했지만 기록하지 않은 분이 있나요?
          </p>
          <button
            type="button"
            className="ml-20 h-[84px] w-[156px] shrink-0 rounded-xl border-3 border-[#dc5a1e] text-[28px] font-bold text-[#dc5a1e]"
          >
            기타 추가
          </button>
        </section>

        <section className="ml-[42px] flex items-center gap-14 border-t-2 border-[#d3d3d7] pt-[46px] pb-6 pl-[14px]">
          <WatchIcon />
          <p className="text-[41px] leading-[54px]">Samsung Galaxy Watch4 Classic</p>
        </section>
      </main>
    </div>
  );
}
